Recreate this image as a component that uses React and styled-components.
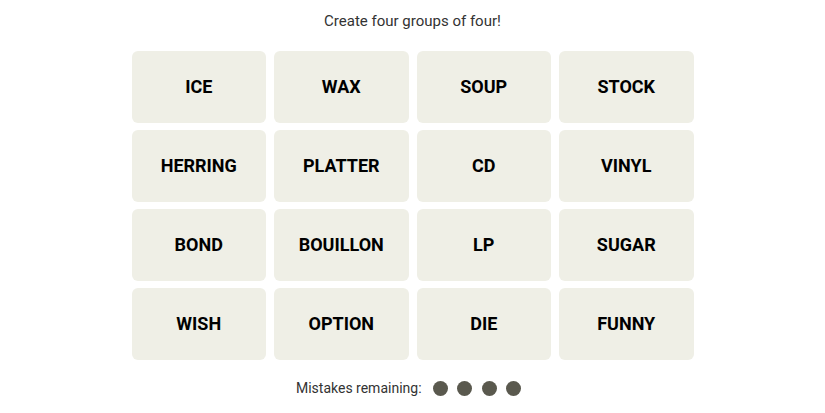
import React from "react"
import styled, { createGlobalStyle } from "styled-components"

const GlobalStyle = createGlobalStyle`
  html, body {
    margin: 0;
    padding: 0;
    background: #ffffff;
  }
  body {
    font-family: "Libre Franklin", "Roboto", "Liberation Sans", sans-serif;
  }
`

const Page = styled.main`
  width: 825px;
  height: 413px;
  display: flex;
  flex-direction: column;
  align-items: center;
  box-sizing: border-box;
  padding-top: 12px;
`

const Prompt = styled.p`
  margin: 0;
  font-family: "Roboto", "Liberation Sans", sans-serif;
  font-size: 15px;
  line-height: 19px;
  color: #333333;
`

const Board = styled.div`
  margin-top: 20px;
  display: grid;
  grid-template-columns: repeat(4, 134.5px);
  grid-auto-rows: 72px;
  gap: 7px 8px;
`

const Tile = styled.button`
  border: none;
  border-radius: 6px;
  background: #efefe6;
  color: #000000;
  font-family: "Roboto", "Liberation Sans", sans-serif;
  font-weight: 700;
  font-size: 18px;
  text-transform: uppercase;
  display: flex;
  align-items: center;
  justify-content: center;
  padding: 0 0 2px;
  cursor: pointer;
`

const Mistakes = styled.div`
  margin-top: 20px;
  display: flex;
  align-items: center;
  gap: 11px;
  font-family: "Roboto", "Liberation Sans", sans-serif;
  font-size: 14px;
  color: #333333;
  transform: translateX(-4px);
`

const Dots = styled.span`
  display: flex;
  gap: 9.5px;
`

const Dot = styled.span`
  width: 15px;
  height: 15px;
  border-radius: 50%;
  background: #5a594e;
`

const words = [
  "ICE", "WAX", "SOUP", "STOCK",
  "HERRING", "PLATTER", "CD", "VINYL",
  "BOND", "BOUILLON", "LP", "SUGAR",
  "WISH", "OPTION", "DIE", "FUNNY",
]

export default function App() {
  return (
    <>
      <GlobalStyle />
      <Page>
        <Prompt>Create four groups of four!</Prompt>
        <Board>
          {words.map((w) => (
            <Tile key={w}>{w}</Tile>
          ))}
        </Board>
        <Mistakes>
          Mistakes remaining:
          <Dots>
            {[0, 1, 2, 3].map((i) => (
              <Dot key={i} />
            ))}
          </Dots>
        </Mistakes>
      </Page>
    </>
  )
}
